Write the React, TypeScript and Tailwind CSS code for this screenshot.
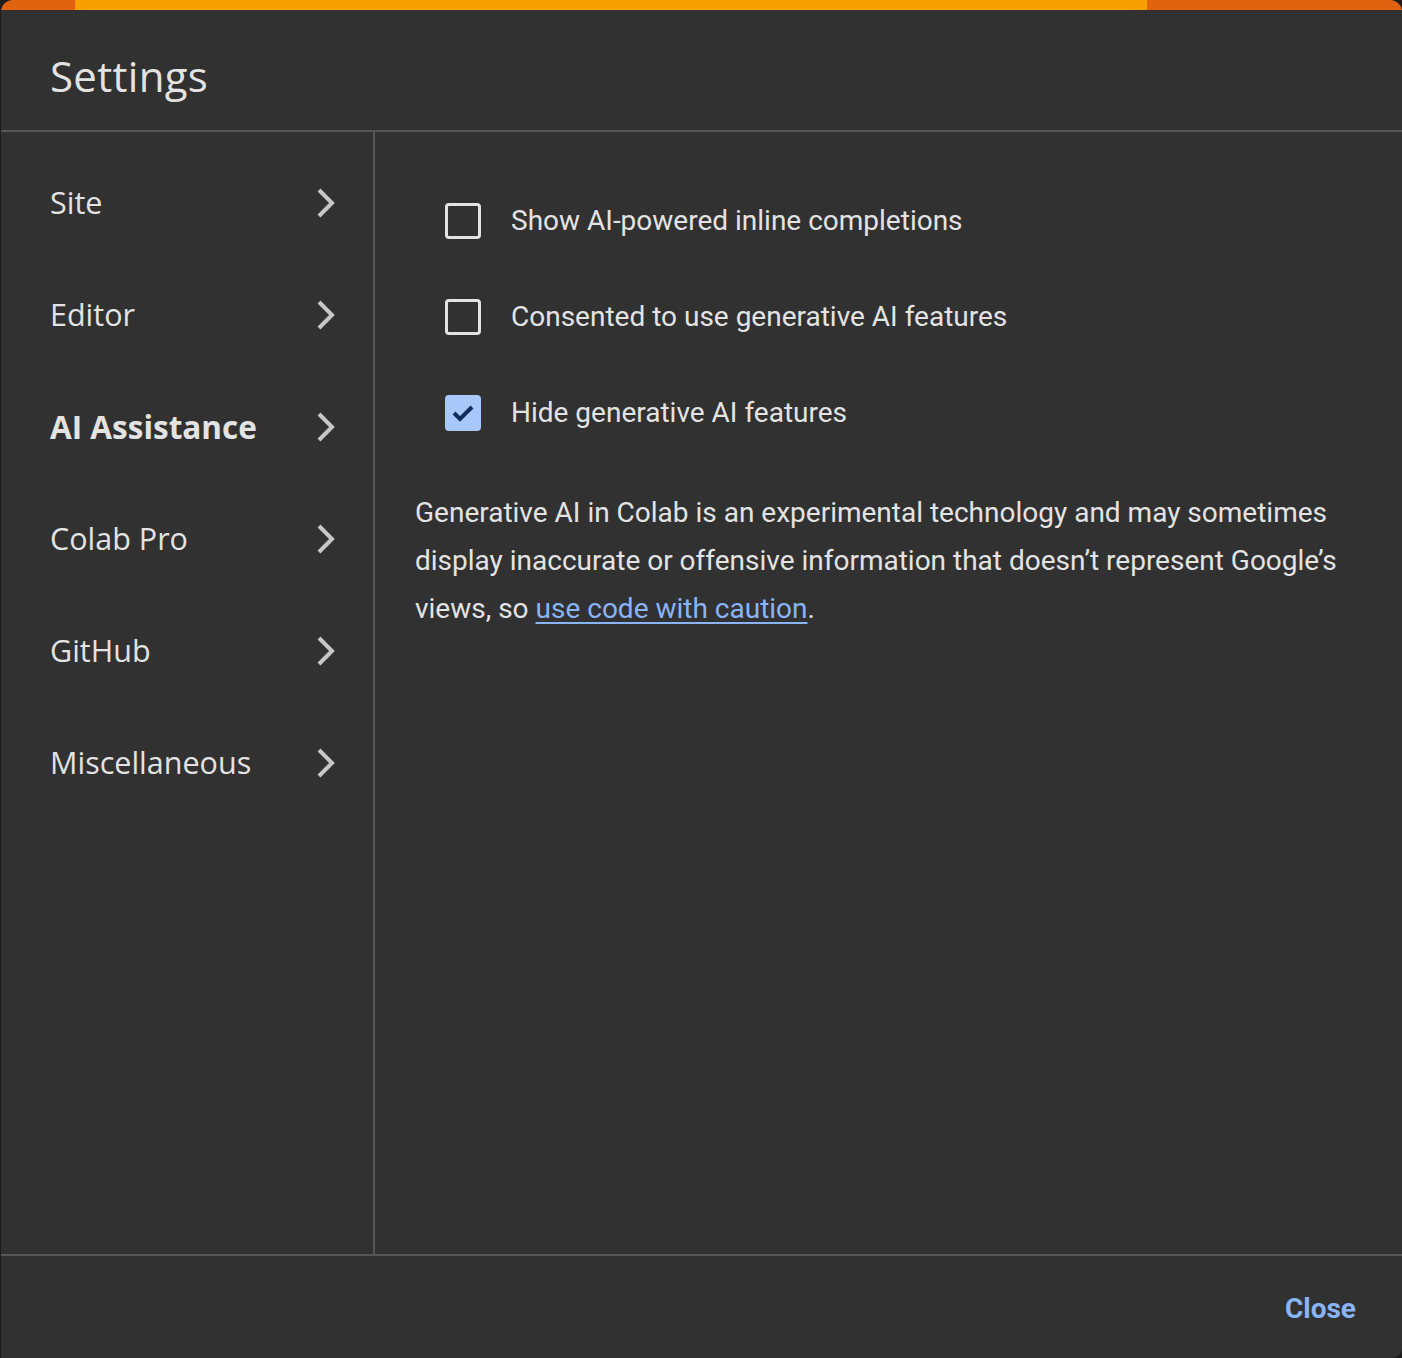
import React from 'react';

const sections = ['Site', 'Editor', 'AI Assistance', 'Colab Pro', 'GitHub', 'Miscellaneous'];

const options = [
  { label: 'Show AI-powered inline completions', checked: false },
  { label: 'Consented to use generative AI features', checked: false },
  { label: 'Hide generative AI features', checked: true },
];

const Chevron: React.FC = () => (
  <svg width="22" height="34" viewBox="0 0 22 34" className="shrink-0">
    <path d="M4 4 L17 17 L4 30" fill="none" stroke="#c7c7c7" strokeWidth="4" />
  </svg>
);

const CheckBox: React.FC<{ checked: boolean }> = ({ checked }) =>
  checked ? (
    <div className="w-[36px] h-[36px] rounded-[4px] bg-[#a8c7fa] flex items-center justify-center shrink-0">
      <svg width="24" height="20" viewBox="0 0 24 20">
        <path d="M3 10 L9 16 L21 4" fill="none" stroke="#0f2d5c" strokeWidth="4" />
      </svg>
    </div>
  ) : (
    <div className="w-[36px] h-[36px] rounded-[4px] border-[3px] border-[#e3e3e3] shrink-0" />
  );

export default function App() {
  return (
    <div className="w-[1402px] h-[1358px] bg-[#1c1c1c] pl-px">
      <div className="h-full bg-[#313131] rounded-tl-[12px] rounded-tr-[12px] rounded-br-[10px] overflow-hidden flex flex-col">
        <div className="h-[10px] flex shrink-0">
          <div className="w-[74px] bg-[#e2630f]" />
          <div className="flex-1 bg-[#f9a000]" />
          <div className="w-[255px] bg-[#e2630f]" />
        </div>

        <div className="h-[122px] shrink-0 border-b-2 border-[#555555] flex items-center pl-[49px] pt-[12px]">
          <h1 className="text-[42px] leading-none text-[#e3e3e3] font-['Open_Sans',sans-serif] tracking-[0.3px]">
            Settings
          </h1>
        </div>

        <div className="flex flex-1 min-h-0">
          <nav className="w-[374px] shrink-0 border-r-2 border-[#555555] pt-[15px]">
            {sections.map((s) => (
              <div key={s} className="h-[112px] flex items-center justify-between pl-[49px] pr-[36px]">
                <span
                  className={`text-[#e3e3e3] font-['Open_Sans',sans-serif] ${
                    s === 'AI Assistance' ? 'font-bold text-[31.5px]' : 'text-[30.5px]'
                  }`}
                >
                  {s}
                </span>
                <Chevron />
              </div>
            ))}
          </nav>

          <div className="flex-1 pl-[40px] pr-[30px] pt-[41px] font-['Roboto',sans-serif] text-[#e3e3e3]">
            {options.map((o) => (
              <div key={o.label} className="h-[96px] flex items-center pl-[30px] gap-[30px]">
                <CheckBox checked={o.checked} />
                <span className="text-[28px]">{o.label}</span>
              </div>
            ))}
            <p className="mt-[28px] text-[28px] leading-[48px]">
              Generative AI in Colab is an experimental technology and may sometimes display inaccurate or
              offensive information that doesn’t represent Google’s views, so{' '}
              <a href="#" className="text-[#8ab4f8] underline underline-offset-[4px]">
                use code with caution
              </a>
              .
            </p>
          </div>
        </div>

        <div className="h-[104px] shrink-0 border-t-2 border-[#555555] flex items-center justify-end pr-[46px] pt-[4px]">
          <button className="text-[28px] font-bold text-[#8ab4f8] font-['Roboto',sans-serif]">Close</button>
        </div>
      </div>
    </div>
  );
}
